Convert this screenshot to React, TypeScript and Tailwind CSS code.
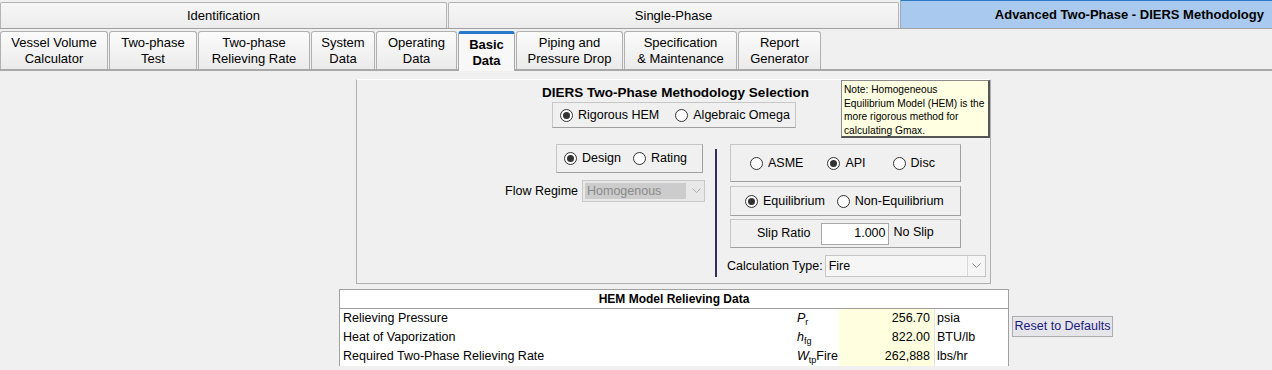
import React from "react";

function Radio({ checked, label, className = "" }: { checked?: boolean; label: string; className?: string }) {
  return (
    <div className={"flex items-center " + className}>
      <span className="w-[13px] h-[13px] rounded-full border border-[#333] bg-white flex items-center justify-center shrink-0">
        {checked && <span className="w-[7px] h-[7px] rounded-full bg-[#333]" />}
      </span>
      <span className="ml-[5px] whitespace-nowrap">{label}</span>
    </div>
  );
}

function Chevron({ color = "#888" }: { color?: string }) {
  return (
    <svg width="9" height="6" viewBox="0 0 9 6">
      <path d="M0.5 0.5 L4.5 4.5 L8.5 0.5" fill="none" stroke={color} strokeWidth="1" />
    </svg>
  );
}

const tabs: { label: string[]; w: string; selected?: boolean }[] = [
  { label: ["Vessel Volume", "Calculator"], w: "w-[108px]" },
  { label: ["Two-phase", "Test"], w: "w-[88px]" },
  { label: ["Two-phase", "Relieving Rate"], w: "w-[112px]" },
  { label: ["System", "Data"], w: "w-[64px]" },
  { label: ["Operating", "Data"], w: "w-[81px]" },
  { label: ["Basic", "Data"], w: "w-[57px]", selected: true },
  { label: ["Piping and", "Pressure Drop"], w: "w-[107px]" },
  { label: ["Specification", "& Maintenance"], w: "w-[113px]" },
  { label: ["Report", "Generator"], w: "w-[83px]" },
];

export default function App() {
  return (
    <div className="w-[1272px] h-[370px] bg-[#f0f0f0] overflow-hidden font-['Liberation_Sans',Arial,sans-serif] text-black text-[12.5px] leading-none">
      {/* Top tab row */}
      <div className="flex items-end h-[29px] border-b border-[#a0a0a0] gap-[1px]">
        <div className="w-[447px] h-[26px] border border-b-0 border-[#b4b4b4] rounded-t-[2px] bg-gradient-to-b from-[#f7f7f7] to-[#ececec] flex items-center justify-center text-[13px]">
          Identification
        </div>
        <div className="w-[451px] h-[26px] border border-b-0 border-[#b4b4b4] rounded-t-[2px] bg-gradient-to-b from-[#f7f7f7] to-[#ececec] flex items-center justify-center text-[13px]">
          Single-Phase
        </div>
        <div className="flex-1 h-[29px] bg-[#a9caee] border-t-[2px] border-[#2a78c8] border-l border-l-[#9ab] flex items-center justify-end pr-[8px] text-[13px] font-bold">
          Advanced Two-Phase - DIERS Methodology
        </div>
      </div>

      {/* Second tab row */}
      <div className="flex items-end h-[42px] border-b-[2px] border-[#a8a8a8] gap-[1px]">
        {tabs.map((t, i) =>
          t.selected ? (
            <div
              key={i}
              className={t.w + " h-[40px] -mb-[2px] border border-b-0 border-[#a8a8a8] border-t-[3px] border-t-[#2a78c8] rounded-t-[3px] bg-[#f8f8f8] flex flex-col items-center justify-center text-[13px] font-bold leading-[16px]"}
            >
              {t.label.map((l) => (
                <span key={l}>{l}</span>
              ))}
            </div>
          ) : (
            <div
              key={i}
              className={t.w + " h-[38px] border border-b-0 border-[#b0b0b0] rounded-t-[3px] bg-gradient-to-b from-[#fbfbfb] to-[#ebebeb] flex flex-col items-center justify-center text-[13px] leading-[16px] pt-[1px]"}
            >
              {t.label.map((l) => (
                <span key={l} className="whitespace-nowrap">{l}</span>
              ))}
            </div>
          )
        )}
      </div>

      {/* Main selection panel */}
      <div className="relative ml-[356px] mt-[8px] w-[635px] h-[205px] border border-[#b0b0b0] border-t-white">
        <div className="absolute left-[484px] top-[0px] w-[149px] h-[58px] bg-[#ffffe1] border border-[#8a8a8a] border-r-[2px] border-b-[2px] border-r-[#555] border-b-[#555] pl-[2px] pr-[1px] pt-[2px] text-[10.2px] leading-[13.5px]">
          Note: Homogeneous Equilibrium Model (HEM) is the more rigorous method for calculating Gmax.
        </div>

        <div className="pt-[5px] text-center font-bold text-[13.5px] leading-[16px] pl-[4px]">
          DIERS Two-Phase Methodology Selection
        </div>
        <div className="ml-[195px] mt-[1px] w-[244px] h-[26px] border border-[#c6c6c6] border-b-[#a0a0a0] flex items-center">
          <Radio checked label="Rigorous HEM" className="ml-[7px]" />
          <Radio label="Algebraic Omega" className="ml-[16px]" />
        </div>

        <div className="flex mt-[16px]">
          {/* left column */}
          <div className="w-[358px] flex flex-col items-end">
            <div className="mr-[12px] w-[147px] h-[29px] border border-[#c6c6c6] border-b-[#a0a0a0] border-r-[#a0a0a0] flex items-center">
              <Radio checked label="Design" className="ml-[7px]" />
              <Radio label="Rating" className="ml-[12px]" />
            </div>
            <div className="flex items-center mt-[7px] mr-[10px]">
              <span className="mr-[4px]">Flow Regime</span>
              <div className="w-[123px] h-[22px] border border-[#c8c8c8] bg-[#e8e8e8] flex items-stretch">
                <div className="flex-1 m-[2px] bg-[#cccccc] flex items-center pl-[2px] text-[#8a8a8a]">Homogenous</div>
                <div className="w-[16px] flex items-center justify-center">
                  <Chevron color="#b0b0b0" />
                </div>
              </div>
            </div>
          </div>

          {/* separator */}
          <div className="w-[2px] h-[128px] mt-[5px] bg-[#30305a]" />

          {/* right column */}
          <div className="ml-[12px] flex flex-col">
            <div className="ml-[1px] w-[231px] h-[38px] border border-[#c6c6c6] border-b-[#a0a0a0] border-r-[#a0a0a0] flex items-center">
              <Radio label="ASME" className="ml-[19px]" />
              <Radio checked label="API" className="ml-[24px]" />
              <Radio label="Disc" className="ml-[27px]" />
            </div>
            <div className="ml-[1px] mt-[4px] w-[231px] h-[30px] border border-[#c6c6c6] border-b-[#a0a0a0] border-r-[#a0a0a0] flex items-center">
              <Radio checked label="Equilibrium" className="ml-[14px]" />
              <Radio label="Non-Equilibrium" className="ml-[12px]" />
            </div>
            <div className="ml-[1px] mt-[3px] w-[231px] h-[29px] border border-[#c6c6c6] border-b-[#a0a0a0] border-r-[#a0a0a0] flex items-center">
              <span className="ml-[26px]">Slip Ratio</span>
              <div className="ml-[10px] w-[68px] h-[22px] bg-white border border-[#a8a8a8] flex items-center justify-end pr-[2px]">1.000</div>
              <span className="ml-[5px] -mt-[2px]">No Slip</span>
            </div>
            <div className="flex items-center mt-[7px] -ml-[2px]">
              <span>Calculation Type:</span>
              <div className="ml-[2px] w-[161px] h-[22px] border border-[#c4c4c4] bg-[#f6f6f6] flex items-center">
                <span className="flex-1 pl-[3px]">Fire</span>
                <div className="w-[18px] h-full border-l border-[#d8d8d8] flex items-center justify-center">
                  <Chevron color="#888" />
                </div>
              </div>
            </div>
          </div>
        </div>
      </div>

      {/* Table + reset */}
      <div className="flex items-start mt-[5px] ml-[339px]">
        <div className="w-[670px] border-l border-t border-r border-[#a0a0a0] bg-white">
          <div className="h-[19px] border-b border-[#a0a0a0] flex items-center justify-center font-bold text-[12px]">
            HEM Model Relieving Data
          </div>
          {[
            { label: "Relieving Pressure", sym: "P", sub: "r", extra: "", val: "256.70", unit: "psia" },
            { label: "Heat of Vaporization", sym: "h", sub: "fg", extra: "", val: "822.00", unit: "BTU/lb" },
            { label: "Required Two-Phase Relieving Rate", sym: "W", sub: "tp", extra: "Fire", val: "262,888", unit: "lbs/hr" },
          ].map((r) => (
            <div key={r.label} className="flex h-[19px]">
              <div className="w-[449px] flex items-center pl-[3px]">{r.label}</div>
              <div className="w-[50px] flex items-center pl-[8px]">
                <span className="italic">{r.sym}</span>
                <span className="text-[9px] relative top-[4px]">{r.sub}</span>
                <span>{r.extra}</span>
              </div>
              <div className="w-[95px] bg-[#ffffe0] flex items-center justify-end pr-[4px]">{r.val}</div>
              <div className="flex-1 border-l border-[#e4e4e4] flex items-center pl-[2px]">{r.unit}</div>
            </div>
          ))}
        </div>
        <div className="ml-[3px] mt-[27px] w-[101px] h-[21px] border border-[#adadad] bg-[#e5e5ea] flex items-center justify-center text-[#1a1a80]">
          Reset to Defaults
        </div>
      </div>
    </div>
  );
}
